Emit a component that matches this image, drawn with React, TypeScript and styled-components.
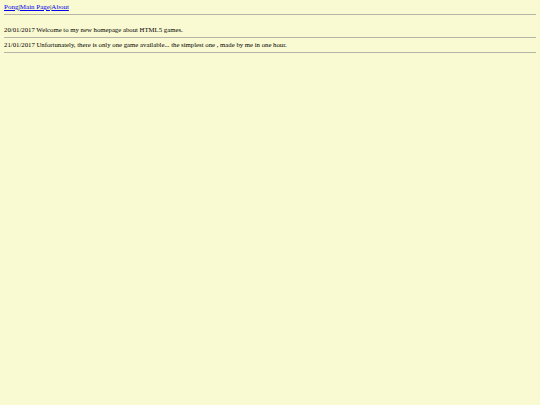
import React from 'react';
import styled, { createGlobalStyle } from 'styled-components';

const GlobalStyle = createGlobalStyle`
  html, body {
    margin: 0;
    background: #fafad2;
  }
  body {
    padding: 2px 4px 0 4px;
    font-family: "Liberation Serif", "Times New Roman", serif;
    font-size: 7px;
    color: #000;
  }
`;

const Nav = styled.nav`
  display: flex;
  align-items: center;
  height: 10px;
  line-height: 10px;
`;

const NavLink = styled.a`
  color: #0000ee;
  text-decoration: underline;
`;

const Sep = styled.span`
  color: #000;
`;

const Rule = styled.hr<{ $gap?: number }>`
  margin: ${p => p.$gap ?? 3}px 0 0 0;
  border: none;
  border-top: 1px solid #b4b4a8;
  height: 0;
`;

const News = styled.div<{ $first?: boolean }>`
  font-size: 6.75px;
  line-height: 8px;
  padding-top: ${p => (p.$first ? '11px' : '3px')};
`;

const entries = [
  '20/01/2017 Welcome to my new homepage about HTML5 games.',
  '21/01/2017 Unfortunately, there is only one game available... the simplest one , made by me in one hour.',
];

export default function App() {
  return (
    <>
      <GlobalStyle />
      <Nav>
        <NavLink href="#">Pong</NavLink>
        <Sep>|</Sep>
        <NavLink href="#">Main Page</NavLink>
        <Sep>|</Sep>
        <NavLink href="#">About</NavLink>
      </Nav>
      <Rule $gap={2} />
      {entries.map((e, i) => (
        <React.Fragment key={i}>
          <News $first={i === 0}>{e}</News>
          <Rule />
        </React.Fragment>
      ))}
    </>
  );
}
